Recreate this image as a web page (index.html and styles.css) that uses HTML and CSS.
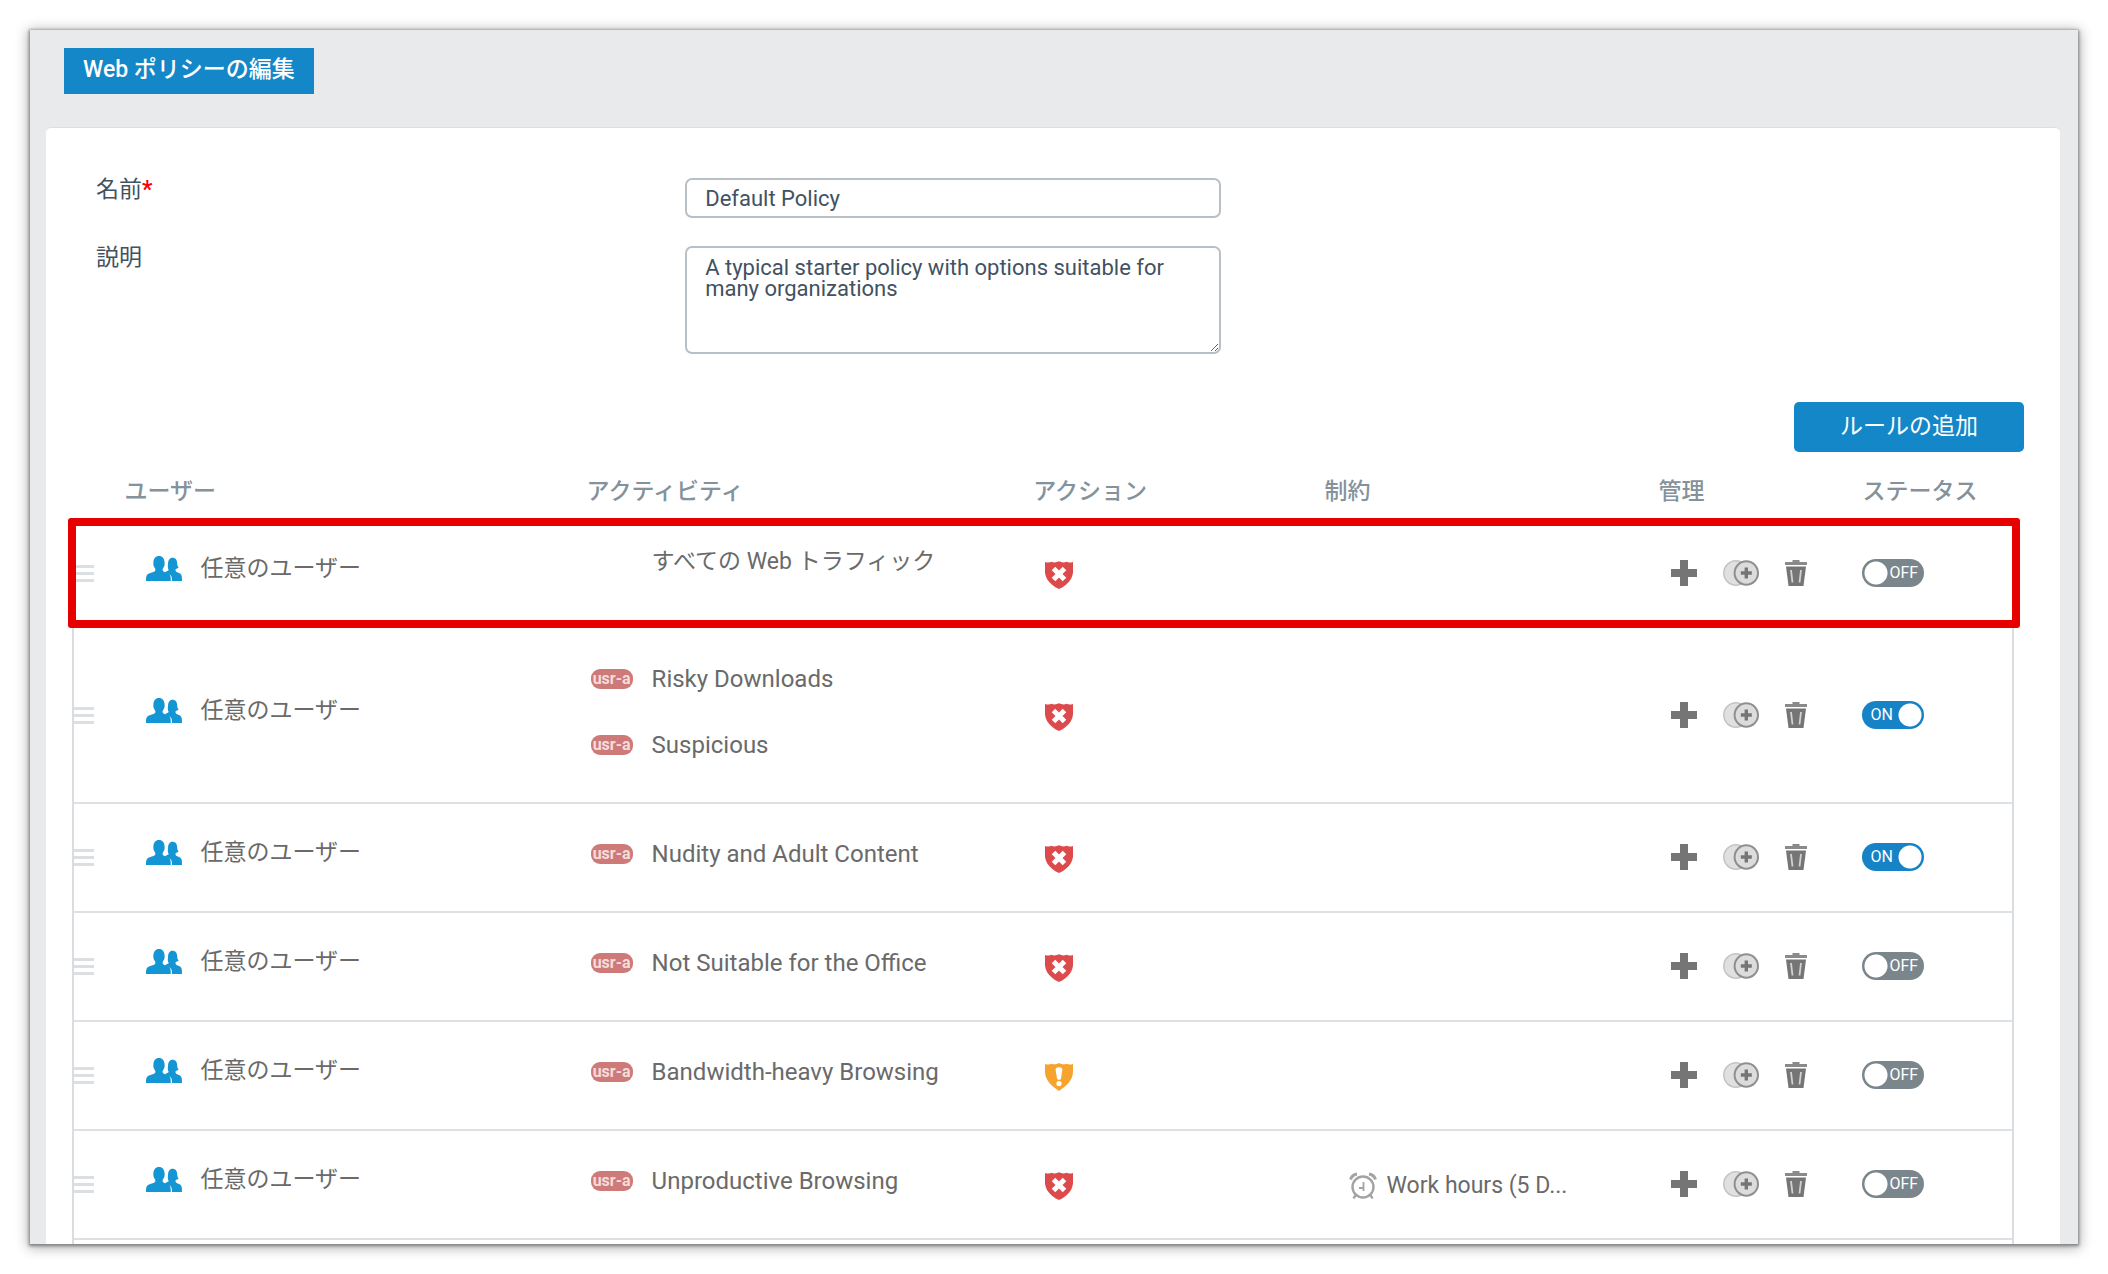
FILE: index.html
```html
<!DOCTYPE html>
<html lang="ja">
<head>
<meta charset="utf-8">
<title>Web ポリシーの編集</title>
<link rel="stylesheet" href="styles.css">
</head>
<body>
<svg class="sprite" aria-hidden="true">
  <symbol id="users" viewBox="0 0 36 25">
    <path d="M18.500 16.200c2-1 3.800-1.500 4.300-2.300-1.300-1.700-1-4-.8-6 .2-3.700 1.700-6.100 4.300-6.100 3.400 0 4.700 2.200 4.900 5.400.1 2 .4 3.300 1.500 4.300-.9.800-2 1.200-3 1.400-.5 1.700.1 2.600 1.500 3.300 2.700 1.200 4.300 1.600 4.600 4.300l.2 4.500H26c.1-4.500-.8-5.600-3.500-6.900z"/>
    <path d="M0 25c0-4.200.4-6.200 2.500-7.200 2.800-1.300 6.200-1.700 6.800-3.300.3-1.200-.1-1.800-.8-2.900C7.600 10.200 7.200 8.900 7.400 6.500 7.600 2.500 9.500 0 13 0s5.400 2.500 5.600 6.500c.2 2.400-.2 3.700-1.100 5.100-.7 1.100-1.100 1.700-.8 2.900.6 1.600 4 2 6.100 3.300 1.700 1 2 3.200 2 7.200z"/>
  </symbol>
  <symbol id="block" viewBox="0 0 28 28">
    <path fill="#dd4a4c" d="M0 1c2.500.9 5 .7 6.500-.2 2 1 5.300.8 7.500-.5 2.200 1.300 5.500 1.500 7.500.5 1.500.9 4 1.100 6.500.2.600 6.500.6 12-2 17-2.500 4.300-7 8-12 10-5-2-9.500-5.700-12-10C-.6 13-.6 7.500 0 1z"/>
    <path stroke="#fff" stroke-width="5" d="M8.500 7.500l11 11M19.500 7.500l-11 11"/>
    <path stroke="#fff" stroke-width="3" d="M11 13h6"/>
  </symbol>
  <symbol id="warn" viewBox="0 0 28 28">
    <path fill="#f7a42f" d="M0 1c3 .8 5 .6 6.500-.3 2 1 5.300.8 7.500-.7 2.200 1.500 5.500 1.700 7.500.7 1.500.9 3.500 1.100 6.500.3v8c-.2 8-6.500 14-14 19C6.500 23 .2 17 0 9z"/>
    <path fill="#fff" d="M10.600 6.500c0-3 6.800-3 6.800 0L16 15.500c-.3 1.800-3.700 1.800-4 0z"/>
    <circle cx="14" cy="20.500" r="2.600" fill="#fff"/>
  </symbol>
  <symbol id="plus" viewBox="0 0 26 26">
    <path fill="#757575" d="M9 0h8v9h9v8h-9v9H9v-9H0V9h9z"/>
  </symbol>
  <symbol id="clone" viewBox="0 0 36 26">
    <circle cx="13" cy="13" r="12.200" fill="#e0e0e0" stroke="#c4c4c4" stroke-width="1.500"/>
    <circle cx="23.300" cy="13" r="11.700" fill="#dcdcdc" stroke="#8f8f8f" stroke-width="2"/>
    <path stroke="#757575" stroke-width="3.400" d="M23.300 7.500v11M17.800 13h11"/>
  </symbol>
  <symbol id="trash" viewBox="0 0 22 26">
    <path fill="#8a8a8a" d="M7.500 0h7v2H22v3H0V2h7.500z"/>
    <path fill="#757575" d="M1 6.500h20L18.500 26h-15z"/>
    <path stroke="#d2d2d2" stroke-width="1.800" fill="none" d="M6 10l1.500 12.500M16 10l-1.500 12.500"/>
  </symbol>
  <symbol id="clock" viewBox="0 0 28 28">
    <g fill="none" stroke="#a3a3a3" stroke-width="2.400">
      <circle cx="14" cy="15" r="10.500"/>
      <path stroke-width="3" d="M1.500 7.500C2.500 4.500 5 2.500 8 2M26.500 7.500C25.500 4.500 23 2.500 20 2"/>
      <path d="M6.500 23l-2 3.500M21.500 23l2 3.500"/>
      <path stroke-width="1.800" d="M14.500 10v9M10 16h5"/>
    </g>
  </symbol>
</svg>

<main class="window">
  <h1 class="title">Web ポリシーの編集</h1>

  <section class="panel">
    <form class="form">
      <label for="name">名前<span class="required">*</span></label>
      <input id="name" class="field" type="text" value="Default Policy">
      <label for="desc">説明</label>
      <textarea id="desc" class="field area">A typical starter policy with options suitable for many organizations</textarea>
    </form>

    <div class="toolbar"><button class="add" type="button">ルールの追加</button></div>

    <div class="rules-wrap">
    <table class="rules">
      <colgroup>
        <col class="c-grip"><col class="c-user"><col class="c-activity"><col class="c-action"><col class="c-limit"><col class="c-manage"><col class="c-status">
      </colgroup>
      <thead>
        <tr><td></td><th>ユーザー</th><th>アクティビティ</th><th>アクション</th><th>制約</th><th>管理</th><th>ステータス</th></tr>
      </thead>
      <tbody>
        <tr class="selected">
          <td><div class="grip"></div></td>
          <td><div class="user"><svg><use href="#users"/></svg>任意のユーザー</div></td>
          <td><div class="activities"><div class="activity untagged">すべての Web トラフィック</div></div></td>
          <td><svg class="shield"><use href="#block"/></svg></td>
          <td></td>
          <td><div class="tools"><button type="button" aria-label="追加"><svg class="i-plus"><use href="#plus"/></svg></button><button type="button" aria-label="複製"><svg class="i-clone"><use href="#clone"/></svg></button><button type="button" aria-label="削除"><svg class="i-trash"><use href="#trash"/></svg></button></div></td>
          <td><label class="switch"><input type="checkbox" aria-label="ステータス"><span class="off">OFF</span><span class="on">ON</span></label></td>
        </tr>
        <tr class="double">
          <td><div class="grip"></div></td>
          <td><div class="user"><svg><use href="#users"/></svg>任意のユーザー</div></td>
          <td><div class="activities"><div class="activity"><span class="tag">usr-a</span>Risky Downloads</div><div class="activity"><span class="tag">usr-a</span>Suspicious</div></div></td>
          <td><svg class="shield"><use href="#block"/></svg></td>
          <td></td>
          <td><div class="tools"><button type="button" aria-label="追加"><svg class="i-plus"><use href="#plus"/></svg></button><button type="button" aria-label="複製"><svg class="i-clone"><use href="#clone"/></svg></button><button type="button" aria-label="削除"><svg class="i-trash"><use href="#trash"/></svg></button></div></td>
          <td><label class="switch"><input type="checkbox" aria-label="ステータス" checked><span class="off">OFF</span><span class="on">ON</span></label></td>
        </tr>
        <tr>
          <td><div class="grip"></div></td>
          <td><div class="user"><svg><use href="#users"/></svg>任意のユーザー</div></td>
          <td><div class="activities"><div class="activity"><span class="tag">usr-a</span>Nudity and Adult Content</div></div></td>
          <td><svg class="shield"><use href="#block"/></svg></td>
          <td></td>
          <td><div class="tools"><button type="button" aria-label="追加"><svg class="i-plus"><use href="#plus"/></svg></button><button type="button" aria-label="複製"><svg class="i-clone"><use href="#clone"/></svg></button><button type="button" aria-label="削除"><svg class="i-trash"><use href="#trash"/></svg></button></div></td>
          <td><label class="switch"><input type="checkbox" aria-label="ステータス" checked><span class="off">OFF</span><span class="on">ON</span></label></td>
        </tr>
        <tr>
          <td><div class="grip"></div></td>
          <td><div class="user"><svg><use href="#users"/></svg>任意のユーザー</div></td>
          <td><div class="activities"><div class="activity"><span class="tag">usr-a</span>Not Suitable for the Office</div></div></td>
          <td><svg class="shield"><use href="#block"/></svg></td>
          <td></td>
          <td><div class="tools"><button type="button" aria-label="追加"><svg class="i-plus"><use href="#plus"/></svg></button><button type="button" aria-label="複製"><svg class="i-clone"><use href="#clone"/></svg></button><button type="button" aria-label="削除"><svg class="i-trash"><use href="#trash"/></svg></button></div></td>
          <td><label class="switch"><input type="checkbox" aria-label="ステータス"><span class="off">OFF</span><span class="on">ON</span></label></td>
        </tr>
        <tr>
          <td><div class="grip"></div></td>
          <td><div class="user"><svg><use href="#users"/></svg>任意のユーザー</div></td>
          <td><div class="activities"><div class="activity"><span class="tag">usr-a</span>Bandwidth-heavy Browsing</div></div></td>
          <td><svg class="shield"><use href="#warn"/></svg></td>
          <td></td>
          <td><div class="tools"><button type="button" aria-label="追加"><svg class="i-plus"><use href="#plus"/></svg></button><button type="button" aria-label="複製"><svg class="i-clone"><use href="#clone"/></svg></button><button type="button" aria-label="削除"><svg class="i-trash"><use href="#trash"/></svg></button></div></td>
          <td><label class="switch"><input type="checkbox" aria-label="ステータス"><span class="off">OFF</span><span class="on">ON</span></label></td>
        </tr>
        <tr>
          <td><div class="grip"></div></td>
          <td><div class="user"><svg><use href="#users"/></svg>任意のユーザー</div></td>
          <td><div class="activities"><div class="activity"><span class="tag">usr-a</span>Unproductive Browsing</div></div></td>
          <td><svg class="shield"><use href="#block"/></svg></td>
          <td><div class="limit"><svg><use href="#clock"/></svg>Work hours (5 D...</div></td>
          <td><div class="tools"><button type="button" aria-label="追加"><svg class="i-plus"><use href="#plus"/></svg></button><button type="button" aria-label="複製"><svg class="i-clone"><use href="#clone"/></svg></button><button type="button" aria-label="削除"><svg class="i-trash"><use href="#trash"/></svg></button></div></td>
          <td><label class="switch"><input type="checkbox" aria-label="ステータス"><span class="off">OFF</span><span class="on">ON</span></label></td>
        </tr>
        <tr><td colspan="7"></td></tr>
      </tbody>
    </table>
    </div>
  </section>
</main>
</body>
</html>
```
FILE: styles.css
```css
* {
  box-sizing: border-box;
}

body {
  margin: 0;
  padding: 30px;
  height: 100vh;
  background: #fff;
  color: #6a6a6a;
  font-family: Roboto, "Noto Sans CJK JP", sans-serif;
  font-size: 23px;
  line-height: 32px;
}

button,
input,
textarea {
  font-family: inherit;
}

svg {
  display: block;
  flex: none;
}

.sprite {
  position: absolute;
  width: 0;
  height: 0;
}

.window {
  display: flex;
  flex-direction: column;
  align-items: flex-start;
  height: 100%;
  padding: 18px 18px 0 16px;
  overflow: hidden;
  background: #e8eaec;
  box-shadow: 0 1px 3px 1px #808080, 0 2px 12px 2px rgba(0, 0, 0, 0.3);
}

.title {
  flex: none;
  margin: 0 0 33px 18px;
  padding: 6px 19px 8px;
  background: #1487c9;
  color: #fff;
  font-size: 23px;
  font-weight: 500;
  line-height: 32px;
}

.panel {
  flex: 1;
  display: flex;
  flex-direction: column;
  width: 100%;
  min-height: 0;
  padding-top: 50px;
  border-top: 1px solid #dcdfe1;
  border-radius: 5px 5px 0 0;
  background: #fff;
}

.form {
  display: grid;
  grid-template-columns: 30% 27.300%;
  row-gap: 28px;
  padding-left: 50px;
  color: #415262;
}

.form label {
  line-height: 24px;
}

.required {
  color: #f00;
  font-weight: 700;
}

.field {
  width: 100%;
  height: 40px;
  padding: 0 18px;
  border: 2px solid #b9c0c5;
  border-radius: 7px;
  background: #fff;
  color: #415262;
  font-size: 22px;
}

.area {
  height: 108px;
  padding-top: 9px;
  line-height: 21px;
  resize: vertical;
}

.toolbar {
  display: flex;
  justify-content: flex-end;
  padding: 48px 36px 0;
}

.add {
  width: 230px;
  height: 50px;
  padding: 0 0 6px;
  border: 0;
  border-radius: 5px;
  background: #1487c9;
  color: #fff;
  font-size: 23px;
}

.rules-wrap {
  flex: 1;
  min-height: 0;
  margin: 0 46px 0 26px;
}

.rules {
  width: 100%;
  border-spacing: 0;
  table-layout: fixed;
}

.c-grip { width: 2.700%; }
.c-user { width: 23.800%; }
.c-activity { width: 23%; }
.c-action { width: 15%; }
.c-limit { width: 17.200%; }
.c-manage { width: 10.500%; }
.c-status { width: 7.800%; }

.rules th {
  height: 68px;
  padding: 12px 0 0;
  color: #84929b;
  font-size: 23px;
  font-weight: 500;
  text-align: left;
}

.rules td {
  padding: 0;
}

.rules tbody td {
  height: 109px;
  border-bottom: 2px solid #dee1e3;
}

.rules tbody td:first-child {
  border-left: 2px solid #d9dde1;
}

.rules tbody td:last-child {
  border-right: 2px solid #d9dde1;
}

.rules .selected {
  position: relative;
}

.rules .selected td {
  height: 106px;
  padding-top: 3px;
}

.rules .double td {
  height: 178px;
  padding-top: 3px;
}

.selected::after {
  content: "";
  position: absolute;
  inset: -2px -6px -2px -4px;
  border: 8px solid #e60000;
  border-radius: 3px;
  pointer-events: none;
}

.grip {
  width: 20px;
  height: 17px;
  border-top: 3px solid #dbdfe2;
  border-bottom: 3px solid #dbdfe2;
  background: linear-gradient(#dbdfe2, #dbdfe2) 0 4px / 100% 3px no-repeat;
}

.user {
  display: flex;
  align-items: center;
  gap: 18px;
  padding: 0 0 10px 22px;
}

.user svg {
  width: 36px;
  height: 25px;
  fill: #1495d4;
}

.activities {
  display: flex;
  flex-direction: column;
  gap: 34px;
  padding: 0 0 8px 4px;
  font-size: 24px;
}

.selected .activities {
  padding-bottom: 24px;
  font-size: 23px;
}

.activity {
  display: flex;
  align-items: center;
  gap: 19px;
}

.untagged {
  padding-left: 61px;
}

.tag {
  width: 42px;
  height: 20px;
  border-radius: 9px;
  background: #cd7a78;
  color: #f6dcdb;
  font-size: 16px;
  font-weight: 700;
  line-height: 20px;
  text-align: center;
}

.shield {
  width: 28px;
  height: 28px;
  margin: 3px 0 0 12px;
}

.limit {
  display: flex;
  align-items: center;
  gap: 10px;
  padding: 2px 0 0 24px;
}

.limit svg {
  width: 28px;
  height: 28px;
}

.tools {
  display: flex;
  align-items: center;
  gap: 26px;
  padding: 0 0 2px 12px;
}

.tools button {
  padding: 0;
  border: 0;
  background: none;
}

.i-plus { width: 26px; height: 26px; }
.i-clone { width: 36px; height: 26px; }
.i-trash { width: 22px; height: 26px; }

.switch {
  position: relative;
  display: flex;
  align-items: center;
  width: 62px;
  height: 28px;
  margin-bottom: 2px;
  color: #fff;
  font-size: 16px;
}

.switch input {
  appearance: none;
  position: absolute;
  inset: 0;
  margin: 0;
  border-radius: 14px;
  background: radial-gradient(circle at 14px 14px, #fff 11px, transparent 12px) #7b858c;
}

.switch input:checked {
  background: radial-gradient(circle at 48px 14px, #fff 11px, transparent 12px) #1583c5;
}

.switch span {
  position: relative;
  padding-left: 27px;
}

.switch .on {
  display: none;
  padding-left: 8px;
}

.switch input:checked ~ .off {
  display: none;
}

.switch input:checked ~ .on {
  display: block;
}
```
